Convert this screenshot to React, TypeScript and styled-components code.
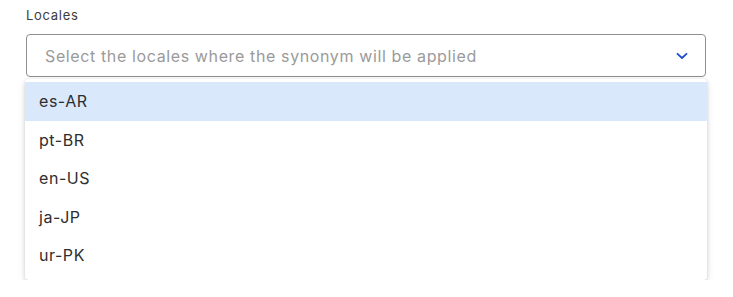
import React from "react";
import styled, { createGlobalStyle } from "styled-components";

const GlobalStyle = createGlobalStyle`
  html, body {
    margin: 0;
    padding: 0;
    background: #ffffff;
  }
  body {
    font-family: "Inter", "Noto Sans", sans-serif;
  }
`;

const Page = styled.div`
  padding: 6px 27px 0 26px;
  width: 733px;
  box-sizing: border-box;
`;

const Label = styled.div`
  font-size: 13px;
  line-height: 18px;
  letter-spacing: 0.7px;
  color: #3d3d3d;
  margin-bottom: 10px;
`;

const Field = styled.div`
  position: relative;
`;

const Trigger = styled.div`
  display: flex;
  align-items: center;
  justify-content: space-between;
  height: 43px;
  box-sizing: border-box;
  padding: 0 17px 0 18px;
  border: 1.5px solid #8f8f8f;
  border-radius: 4px;
  background: #fff;
`;

const Placeholder = styled.span`
  font-size: 16px;
  letter-spacing: 0.62px;
  color: #9a9a9a;
`;

const Menu = styled.ul`
  list-style: none;
  margin: 2px -1px 0;
  padding: 3px 0 5px;
  background: #fff;
  border-radius: 4px;
  box-shadow: 0 1px 4px rgba(0, 0, 0, 0.18), 0 4px 12px rgba(0, 0, 0, 0.06);
`;

const Option = styled.li<{ $active?: boolean }>`
  height: 38.5px;
  display: flex;
  align-items: center;
  padding: 0 14px;
  font-size: 16px;
  letter-spacing: 0.55px;
  color: #2e2e2e;
  background: ${(p) => (p.$active ? "#d9e8fb" : "transparent")};
`;

const Chevron = () => (
  <svg width="12" height="8" viewBox="0 0 12 8" fill="none">
    <path d="M1.5 1.8 L6 6 L10.5 1.8" stroke="#1f4fd1" strokeWidth="1.8" strokeLinecap="round" strokeLinejoin="round" />
  </svg>
);

const locales = ["es-AR", "pt-BR", "en-US", "ja-JP", "ur-PK"];

export default function App() {
  return (
    <>
      <GlobalStyle />
      <Page>
        <Label>Locales</Label>
        <Field>
          <Trigger>
            <Placeholder>Select the locales where the synonym will be applied</Placeholder>
            <Chevron />
          </Trigger>
          <Menu>
            {locales.map((l, i) => (
              <Option key={l} $active={i === 0}>
                {l}
              </Option>
            ))}
          </Menu>
        </Field>
      </Page>
    </>
  );
}
